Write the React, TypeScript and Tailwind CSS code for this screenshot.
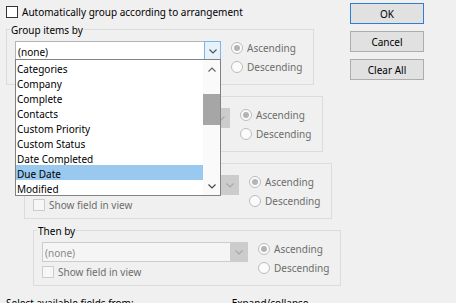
import React from "react";

const Chevron = ({ up = false, color = "#404040" }: { up?: boolean; color?: string }) => (
  <svg width="8" height="5" viewBox="0 0 8 5" className="block">
    <path
      d={up ? "M0.5 4.5 L4 1 L7.5 4.5" : "M0.5 0.5 L4 4 L7.5 0.5"}
      fill="none"
      stroke={color}
      strokeWidth="1.1"
    />
  </svg>
);

const Radio = ({ checked, label }: { checked?: boolean; label: string }) => (
  <div className="flex h-[19px] items-center">
    <div className="flex h-[12px] w-[12px] items-center justify-center rounded-full border border-[#bcbcbc] bg-[#fbfbfb]">
      {checked && <div className="h-[6px] w-[6px] rounded-full bg-[#b4b4b4]" />}
    </div>
    <span className="ml-[4px] pt-[1px] text-[#6d6d6d]">{label}</span>
  </div>
);

const SmallCheck = ({ label, disabled }: { label: string; disabled?: boolean }) => (
  <div className="flex h-[15px] items-center">
    <div
      className={
        disabled
          ? "h-[12px] w-[12px] border border-[#cccccc] bg-[#f7f7f7]"
          : "h-[12px] w-[12px] border border-[#333333] bg-white"
      }
    />
    <span className={disabled ? "ml-[4px] pt-[2px] text-[#6d6d6d]" : "ml-[4px] pt-[1px] text-black"}>
      {label}
    </span>
  </div>
);

const items = [
  "Categories",
  "Company",
  "Complete",
  "Contacts",
  "Custom Priority",
  "Custom Status",
  "Date Completed",
  "Due Date",
  "Modified",
];

const DropList = () => (
  <div className="absolute left-[-1px] top-[calc(100%-1px)] z-10 flex h-[137px] w-[206px] border border-[#828282] bg-white">
    <div className="flex w-[187px] flex-col">
      {items.map((it) => (
        <div
          key={it}
          className={
            it === "Due Date"
              ? "flex h-[15px] items-center bg-[#99c9ef] pl-[1px] pt-[3px] text-black"
              : "flex h-[15px] items-center pl-[1px] pt-[3px] text-black"
          }
        >
          {it}
        </div>
      ))}
    </div>
    <div className="flex w-[17px] flex-col items-center bg-[#fafafa]">
      <div className="flex h-[17px] w-full items-center justify-center pt-[1px]">
        <Chevron up color="#606060" />
      </div>
      <div className="mt-[17px] h-[31px] w-full bg-[#a6a6a6]" />
      <div className="flex-1" />
      <div className="flex h-[17px] w-full items-center justify-center">
        <Chevron color="#404040" />
      </div>
    </div>
  </div>
);

const Combo = ({ active, text }: { active?: boolean; text: string }) =>
  active ? (
    <div className="relative flex h-[20px] w-[206px] items-center border border-[#b4b4b4] bg-white">
      <span className="ml-[2px] flex-1 pt-[3px] text-black">{text}</span>
      <div className="mr-[-1px] flex h-[20px] w-[17px] items-center justify-center border border-[#7eb4ea] bg-[#e5f1fb]">
        <Chevron color="#505050" />
      </div>
      <DropList />
    </div>
  ) : (
    <div className="flex h-[20px] w-[206px] items-center border border-[#cccccc] bg-[#f5f5f5]">
      <span className="ml-[2px] flex-1 pt-[3px] text-[#8a8a8a]">{text}</span>
      <div className="flex h-[18px] w-[17px] items-center justify-center bg-[#cccccc]">
        <Chevron color="#a8a8a8" />
      </div>
    </div>
  );

const Group = ({
  label,
  indent,
  active,
}: {
  label: string;
  indent: string;
  active?: boolean;
}) => (
  <div className={`relative h-[56px] w-[308px] border border-[#dcdcdc] ${indent}`}>
    <span className="absolute left-[3px] top-[-7px] bg-[#f0f0f0] px-[1px] leading-[15px] text-black">
      {label}
    </span>
    <div className="flex pl-[8px]">
      <div className={active ? "relative z-10 mt-[11px] flex flex-col" : "mt-[11px] flex flex-col"}>
        <Combo active={active} text="(none)" />
        <div className="mt-[2px]">
          <SmallCheck label="Show field in view" disabled />
        </div>
      </div>
      <div className="ml-[10px] mt-[8px] flex flex-col">
        <Radio checked label="Ascending" />
        <Radio label="Descending" />
      </div>
    </div>
  </div>
);

const Btn = ({ label, def }: { label: string; def?: boolean }) => (
  <div
    className={
      def
        ? "flex h-[21px] w-[74px] items-center justify-center border border-[#2f7fd0] bg-[#e1e1e1] pt-[2px] text-black"
        : "flex h-[21px] w-[74px] items-center justify-center border border-[#adadad] bg-[#e1e1e1] pt-[2px] text-black"
    }
  >
    {label}
  </div>
);

export default function App() {
  return (
    <div
      className="relative flex h-[303px] w-[456px] overflow-hidden bg-[#f0f0f0] text-[10px] leading-[15px]"
      style={{ fontFamily: '"Noto Sans", "Open Sans", sans-serif' }}
    >
      <div className="flex w-[350px] flex-col">
        <div className="ml-[6px] mt-[4px]">
          <SmallCheck label="Automatically group according to arrangement" />
        </div>
        <div className="mt-[10px]">
          <Group label="Group items by" indent="ml-[6px]" active />
        </div>
        <div className="mt-[11px]">
          <Group label="Then by" indent="ml-[15px]" />
        </div>
        <div className="mt-[11px]">
          <Group label="Then by" indent="ml-[24px]" />
        </div>
        <div className="mt-[11px]">
          <Group label="Then by" indent="ml-[33px]" />
        </div>
        <div className="mt-[9px] flex pt-[1px]">
          <span className="ml-[6px] w-[229px] text-black">Select available fields from:</span>
          <span className="text-black">Expand/collapse defaults:</span>
        </div>
      </div>
      <div className="mt-[3px] flex flex-col gap-[7px]">
        <Btn label="OK" def />
        <Btn label="Cancel" />
        <Btn label="Clear All" />
      </div>
    </div>
  );
}
